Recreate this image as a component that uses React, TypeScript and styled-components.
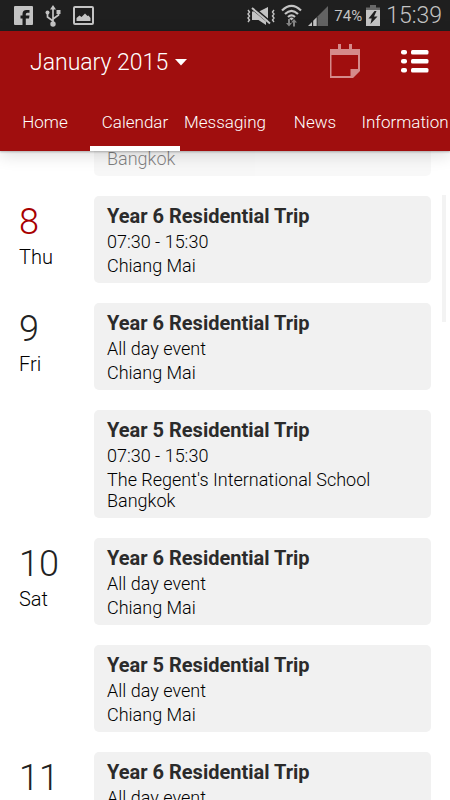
import React from "react";
import styled, { createGlobalStyle } from "styled-components";

const GlobalStyle = createGlobalStyle`
  *, *::before, *::after { box-sizing: border-box; }
  body { margin: 0; background: #fff; font-family: Roboto, "Noto Sans", sans-serif; color: #222; }
  button { font: inherit; color: inherit; background: none; border: 0; padding: 0; cursor: pointer; }
  svg { display: block; flex: none; }
`;

const Screen = styled.div`
  display: flex;
  flex-direction: column;
  height: 100vh;
  overflow: hidden;
`;

const StatusBar = styled.div`
  flex: none;
  display: flex;
  align-items: center;
  justify-content: space-between;
  height: 31px;
  padding: 0 8px 0 13px;
  background: #1f1f1f;
  color: #c4c4c4;
`;

const StatusGroup = styled.div<{ $gap: number }>`
  display: flex;
  align-items: center;
  gap: ${(p) => p.$gap}px;
`;

const Battery = styled.span`
  font-size: 15px;
  line-height: 30px;
`;

const Clock = styled.span`
  font-size: 23px;
  line-height: 30px;
  font-weight: 300;
`;

const Header = styled.header`
  flex: none;
  position: relative;
  z-index: 1;
  background: #a00e0e;
  color: #fff;
  box-shadow: 0 1px 2px rgba(0, 0, 0, 0.25), 0 4px 16px rgba(0, 0, 0, 0.14);
`;

const Toolbar = styled.div`
  display: flex;
  align-items: center;
  justify-content: space-between;
  height: 61px;
  padding: 0 21px 0 30px;
`;

const MonthButton = styled.button`
  display: flex;
  align-items: center;
  gap: 7px;
  padding-top: 2px;
  font-size: 23px;
  line-height: 28px;
  font-weight: 300;
`;

const Actions = styled.div`
  display: flex;
  align-items: center;
  gap: 39px;
`;

const Tabs = styled.nav`
  display: flex;
  height: 59px;
`;

const Tab = styled.a<{ $active?: boolean }>`
  flex: 1 1 0;
  min-width: 0;
  display: flex;
  justify-content: center;
  align-items: center;
  padding-top: 5px;
  border-bottom: 5px solid ${(p) => (p.$active ? "#fff" : "transparent")};
  color: #fff;
  font-size: 17px;
  line-height: 24px;
  font-weight: 300;
  text-decoration: none;
  white-space: nowrap;
`;

const Agenda = styled.main`
  flex: 1;
  min-height: 0;
  position: relative;
  overflow: hidden;
`;

const DayList = styled.div`
  display: flex;
  flex-direction: column;
  gap: 20px;
  margin-top: -3px;
`;

const Day = styled.section<{ $past?: boolean }>`
  display: grid;
  grid-template-columns: 75px 1fr;
  padding: 0 19px;
  opacity: ${(p) => (p.$past ? 0.5 : 1)};
`;

const DateLabel = styled.div`
  display: flex;
  flex-direction: column;
  padding-top: 5px;
`;

const DayNumber = styled.span<{ $today?: boolean }>`
  font-size: 36px;
  line-height: 42px;
  font-weight: 300;
  color: ${(p) => (p.$today ? "#a80000" : "#222")};
`;

const Weekday = styled.span`
  font-size: 20px;
  line-height: 28px;
  font-weight: 300;
  color: #000;
`;

const Events = styled.div`
  display: flex;
  flex-direction: column;
  gap: 20px;
`;

const Card = styled.article<{ $continued?: boolean; $open?: boolean }>`
  min-height: ${(p) => (p.$open ? 87 : 0)}px;
  padding: ${(p) => (p.$continued ? 0 : 8)}px 13px 7px;
  border-radius: ${(p) => (p.$continued ? "0 0 5px 5px" : "5px")};
  background: #f1f1f1;
`;

const EventTitle = styled.h2`
  margin: 0;
  font-size: 20px;
  line-height: 24px;
  font-weight: 700;
  color: #2b2b2b;
`;

const EventTime = styled.p`
  margin: 0;
  font-size: 18px;
  line-height: 27px;
  font-weight: 300;
  color: #000;
`;

const EventPlace = styled.p`
  margin: 0;
  font-size: 18px;
  line-height: 21px;
  font-weight: 300;
  color: #000;
`;

const ScrollThumb = styled.div`
  position: absolute;
  top: 44px;
  right: 4px;
  width: 4px;
  height: 127px;
  background: #f3f3f3;
`;

type EventInfo = { title?: string; time?: string; place?: string };
type DayInfo = { number?: string; weekday?: string; today?: boolean; past?: boolean; events: EventInfo[] };

const days: DayInfo[] = [
  { past: true, events: [{ place: "Bangkok" }] },
  {
    number: "8",
    weekday: "Thu",
    today: true,
    events: [{ title: "Year 6 Residential Trip", time: "07:30 - 15:30", place: "Chiang Mai" }],
  },
  {
    number: "9",
    weekday: "Fri",
    events: [
      { title: "Year 6 Residential Trip", time: "All day event", place: "Chiang Mai" },
      {
        title: "Year 5 Residential Trip",
        time: "07:30 - 15:30",
        place: "The Regent's International School Bangkok",
      },
    ],
  },
  {
    number: "10",
    weekday: "Sat",
    events: [
      { title: "Year 6 Residential Trip", time: "All day event", place: "Chiang Mai" },
      { title: "Year 5 Residential Trip", time: "All day event", place: "Chiang Mai" },
    ],
  },
  { number: "11", events: [{ title: "Year 6 Residential Trip", time: "All day event" }] },
];

const tabs = ["Home", "Calendar", "Messaging", "News", "Information"];

const FacebookIcon = () => (
  <svg width="20" height="20" viewBox="0 0 20 20">
    <rect x="1" y="0" width="19" height="19" rx="1" fill="currentColor" />
    <path fill="#1f1f1f" d="M9.500 19v-6.500h-2V9.500h2V8q0-4 4-4h3v2.700h-2.200q-1.500 0-1.500 1.500v1.300h3.700l-.5 3h-3.200V19Z" />
  </svg>
);

const UsbIcon = () => (
  <svg width="16" height="22" viewBox="0 0 16 22" fill="none" stroke="currentColor" strokeWidth="1.700">
    <path d="M8 3v16M8 16L2.500 12V8M8 14l5.500-4V7" />
    <path fill="currentColor" stroke="none" d="M8 0l3 4.500H5ZM11.500 5h4v4h-4Z" />
    <circle cx="2.500" cy="7.500" r="2" fill="currentColor" stroke="none" />
    <circle cx="8" cy="19" r="2.700" fill="currentColor" stroke="none" />
  </svg>
);

const PictureIcon = () => (
  <svg width="21" height="20" viewBox="0 0 21 20">
    <rect x="1" y="1" width="19" height="17" rx="1" fill="none" stroke="currentColor" strokeWidth="2" />
    <path fill="currentColor" d="M3.500 15v-3l3-2.500 2 1.500 3.500-3.500 2.500 2.500 1-.5 2 2.500v3Z" />
  </svg>
);

const MuteIcon = () => (
  <svg width="29" height="20" viewBox="0 0 29 20" fill="none" stroke="currentColor">
    <path strokeWidth="1.400" d="M2 4l1.500 2L2 8l1.500 2L2 12l1.500 2L2 16M28 4l-1.500 2L28 8l-1.500 2 1.500 2-1.500 2 1.500 2" />
    <path fill="currentColor" stroke="none" d="M6 5.500h2l12 10v3.500l-7.500-5H6ZM12 6l10-5v14Z" />
    <path stroke="#1f1f1f" strokeWidth="1.500" d="M7.500 1l17 14.500" />
    <path strokeWidth="2" d="M6 2l18 15.500" />
  </svg>
);

const WifiIcon = () => (
  <svg width="21" height="23" viewBox="0 0 21 23" fill="none" stroke="currentColor" strokeWidth="2.200">
    <path d="M1 6.500Q10.500-2.800 20 6.500M4 10q6.500-6.300 13 0M7 13q3.500-3.200 7 0" />
    <path fill="currentColor" stroke="none" d="M8.300 14.200q2.200-1.600 4.400 0L10.500 16.500Z" />
    <path fill="#858585" stroke="none" d="M7 15h2v4h2l-3 3.500L5 19h2ZM12 22.500v-4h-2l3-3.500 3 3.500h-2v4Z" />
  </svg>
);

const SignalIcon = () => (
  <svg width="20" height="20" viewBox="0 0 20 20">
    <path fill="#636363" d="M20 0v20H9.500V10.500Z" />
    <path fill="currentColor" d="M0 20l4-4v4ZM5.200 20v-5.200L8.700 11.300V20Z" />
  </svg>
);

const BatteryIcon = () => (
  <svg width="14" height="22" viewBox="0 0 14 22">
    <path fill="#696969" d="M4 0h6v2.500h4V6H0V2.500h4Z" />
    <path fill="currentColor" d="M0 5h14v16H0Z" />
    <path fill="#1f1f1f" d="M8.500 6L2.500 13.500h3.200L4.500 19l7-7.500H8L10.500 6Z" />
  </svg>
);

const CaretIcon = () => (
  <svg width="12" height="7" viewBox="0 0 12 7">
    <path fill="#fff" d="M0 0h12L6 6.500Z" />
  </svg>
);

const CalendarIcon = () => (
  <svg width="31" height="35" viewBox="0 0 31 35" fill="#d58a8a">
    <path d="M8 0h3v6H8ZM19 0h3v6h-3ZM0 5h30v6H0Z" />
    <path fillRule="evenodd" d="M0 9h30v18l-7 7H0ZM1.500 11v21H20.500v-7H28V11Z" />
  </svg>
);

const ListIcon = () => (
  <svg width="29" height="23" viewBox="0 0 29 23" fill="#fff">
    {[0, 9, 18].map((y) => (
      <React.Fragment key={y}>
        <rect x="1" y={y} width="6" height="4.500" rx="2" />
        <rect x="11" y={y} width="17.500" height="4.500" rx="1.500" />
      </React.Fragment>
    ))}
  </svg>
);

export default function App() {
  return (
    <>
      <GlobalStyle />
      <Screen>
        <StatusBar>
          <StatusGroup $gap={12}>
            <FacebookIcon />
            <UsbIcon />
            <PictureIcon />
          </StatusGroup>
          <StatusGroup $gap={6}>
            <MuteIcon />
            <WifiIcon />
            <SignalIcon />
            <StatusGroup $gap={4}>
              <Battery>74%</Battery>
              <BatteryIcon />
            </StatusGroup>
            <Clock>15:39</Clock>
          </StatusGroup>
        </StatusBar>
        <Header>
          <Toolbar>
            <MonthButton>
              January 2015
              <CaretIcon />
            </MonthButton>
            <Actions>
              <button aria-label="Today">
                <CalendarIcon />
              </button>
              <button aria-label="List view">
                <ListIcon />
              </button>
            </Actions>
          </Toolbar>
          <Tabs>
            {tabs.map((name) => (
              <Tab key={name} href="#" $active={name === "Calendar"}>
                {name}
              </Tab>
            ))}
          </Tabs>
        </Header>
        <Agenda>
          <DayList>
            {days.map((day, i) => (
              <Day key={i} $past={day.past}>
                <DateLabel>
                  {day.number && <DayNumber $today={day.today}>{day.number}</DayNumber>}
                  {day.weekday && <Weekday>{day.weekday}</Weekday>}
                </DateLabel>
                <Events>
                  {day.events.map((event, j) => (
                    <Card key={j} $continued={!event.title} $open={!!event.title && !event.place}>
                      {event.title && <EventTitle>{event.title}</EventTitle>}
                      {event.time && <EventTime>{event.time}</EventTime>}
                      {event.place && <EventPlace>{event.place}</EventPlace>}
                    </Card>
                  ))}
                </Events>
              </Day>
            ))}
          </DayList>
          <ScrollThumb />
        </Agenda>
      </Screen>
    </>
  );
}
